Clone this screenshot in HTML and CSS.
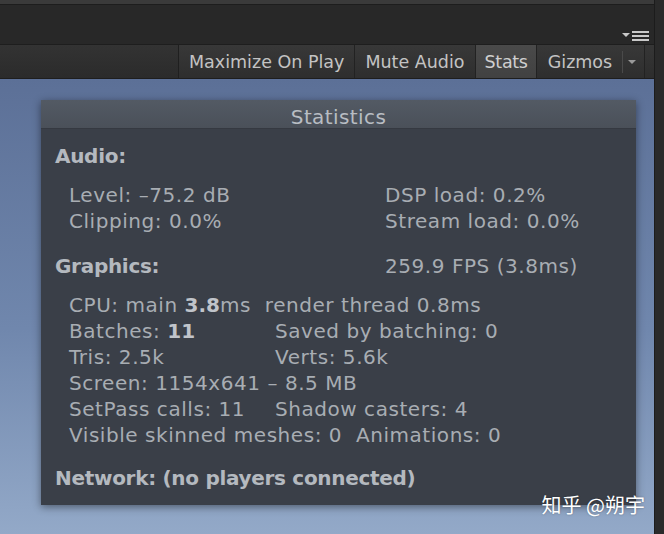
FILE: index.html
```html
<!DOCTYPE html>
<html>
<head>
<meta charset="utf-8">
<link rel="stylesheet" href="styles.css">
</head>
<body>
<div class="page">
  <div class="window">
    <div class="topstrip"></div>
    <div class="tabarea">
      <svg class="menuicon" width="28" height="12" viewBox="0 0 28 12">
        <polygon points="0,3 8,3 4,7" fill="#c9c9c9"/>
        <rect x="10" y="1" width="17" height="2" fill="#c9c9c9"/>
        <rect x="10" y="5" width="17" height="2" fill="#c9c9c9"/>
        <rect x="10" y="9" width="17" height="2" fill="#c9c9c9"/>
      </svg>
    </div>
    <div class="toolbar">
      <div class="filler"></div>
      <div class="btn">Maximize On Play</div>
      <div class="btn">Mute Audio</div>
      <div class="btn active">Stats</div>
      <div class="btn gizmos"><span>Gizmos</span><span class="sep"></span><svg class="arrow" width="8" height="5" viewBox="0 0 8 5"><polygon points="0,0 8,0 4,4" fill="#9a9a9a"/></svg></div>
      <div class="tail"></div>
    </div>
    <div class="scene">
      <div class="panel">
        <div class="panel-head">Statistics</div>
        <div class="panel-body">
          <div class="label">Audio:</div>
          <div class="grid audio">
            <div>Level: –75.2 dB</div><div>DSP load: 0.2%</div>
            <div>Clipping: 0.0%</div><div>Stream load: 0.0%</div>
          </div>
          <div class="graphics-row">
            <div class="label">Graphics:</div>
            <div class="fps">259.9 FPS (3.8ms)</div>
          </div>
          <div class="grid gfx">
            <div class="full">CPU: main <b>3.8</b>ms&nbsp; render thread 0.8ms</div>
            <div>Batches: <b>11</b></div><div>Saved by batching: 0</div>
            <div>Tris: 2.5k</div><div>Verts: 5.6k</div>
            <div class="full">Screen: 1154x641 – 8.5 MB</div>
            <div>SetPass calls: 11</div><div>Shadow casters: 4</div>
            <div class="full">Visible skinned meshes: 0&nbsp; Animations: 0</div>
          </div>
          <div class="label network">Network: (no players connected)</div>
        </div>
      </div>
    </div>
  </div>
  <div class="rightedge"></div>
  <div class="watermark">知乎 @朔宇</div>
</div>
</body>
</html>
```
FILE: styles.css
```css
html, body {
  margin: 0;
  padding: 0;
  background: #282828;
}
.page {
  position: relative;
  width: 664px;
  height: 534px;
  display: flex;
  overflow: hidden;
  font-family: "DejaVu Sans", "Noto Sans", sans-serif;
}
.window {
  width: 654px;
  display: flex;
  flex-direction: column;
}
.rightedge {
  flex: 1;
  background: #2a2a2a;
  border-left: 1px solid #1c1c1c;
}
.topstrip {
  height: 4px;
  background: #3a3a3a;
  border-bottom: 1px solid #1d1d1d;
}
.tabarea {
  height: 39px;
  background: #282828;
  display: flex;
  justify-content: flex-end;
  align-items: flex-end;
  padding-right: 4px;
  padding-bottom: 2px;
  box-sizing: border-box;
}
.menuicon {
  display: block;
}
.toolbar {
  height: 35px;
  box-sizing: border-box;
  border-top: 1px solid #1e1e1e;
  border-bottom: 1px solid #1e1e1e;
  background: linear-gradient(#363636, #2d2d2d);
  display: flex;
}
.filler {
  width: 178px;
  background: linear-gradient(#333, #2b2b2b);
  border-right: 1px solid #1f1f1f;
}
.btn {
  display: flex;
  align-items: center;
  padding: 1px 10px 0 10px;
  font-size: 17.5px;
  color: #c3c3c3;
  border-right: 1px solid #222;
  background: linear-gradient(#383838, #2e2e2e);
}
.btn.active {
  background: linear-gradient(#4a4a4a, #414141);
  color: #cfcfcf;
  padding: 1px 8px 0 9px;
  letter-spacing: -0.3px;
}
.btn.gizmos {
  padding-left: 11px;
  padding-right: 8px;
}
.sep {
  width: 1px;
  height: 22px;
  background: #4a4a4a;
  margin: 0 5px 0 10px;
}
.arrow {
  display: block;
}
.tail {
  flex: 1;
  background: linear-gradient(#363636, #2d2d2d);
}
.scene {
  flex: 1;
  background: linear-gradient(#5c7097, #7087ad 55%, #93a9c8);
  padding: 21px 0 0 41px;
}
.panel {
  width: 595px;
  height: 405px;
  background: #3a3f48;
  box-shadow: 0 2px 8px rgba(0, 0, 0, 0.45);
  display: flex;
  flex-direction: column;
}
.panel-head {
  height: 29px;
  box-sizing: border-box;
  padding-top: 5px;
  background: linear-gradient(#535a64, #4a5059);
  border-bottom: 1px solid #353941;
  text-align: center;
  font-size: 20px;
  line-height: 24px;
  letter-spacing: 0.4px;
  color: #b8bdc3;
}
.panel-body {
  padding: 14px 0 0 14px;
  font-size: 20px;
  line-height: 26px;
  letter-spacing: 0.55px;
  color: #a8adb3;
}
.label {
  font-weight: bold;
  letter-spacing: -0.3px;
  color: #b4b9bf;
}
.grid {
  display: grid;
  padding-left: 14px;
}
.grid b {
  color: #c0c4ca;
  letter-spacing: 0;
}
.audio {
  grid-template-columns: 316px auto;
  margin-top: 13px;
}
.graphics-row {
  display: grid;
  grid-template-columns: 330px auto;
  margin-top: 19px;
}
.gfx {
  grid-template-columns: 206px auto;
  margin-top: 13px;
}
.gfx .full {
  grid-column: 1 / 3;
}
.network {
  margin-top: 17px;
}
.watermark {
  position: absolute;
  right: 19px;
  top: 491px;
  font-family: "Noto Sans CJK SC", sans-serif;
  font-size: 20px;
  line-height: 28px;
  color: #ffffff;
  text-shadow: 0 0 2px rgba(0, 0, 0, 0.3);
}
```
